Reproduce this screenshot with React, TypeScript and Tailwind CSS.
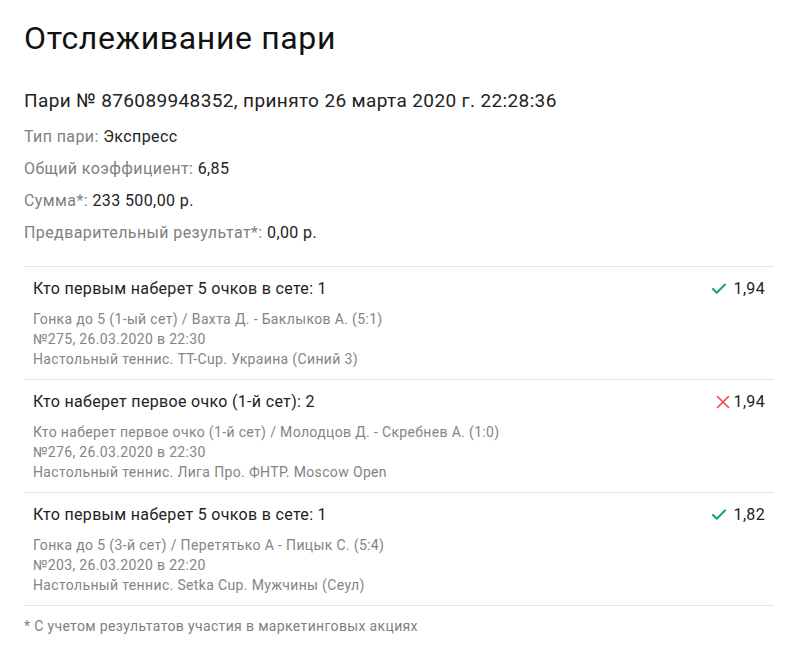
import React from 'react'
import { Check, X } from 'lucide-react'

interface BetEvent {
  outcome: string
  market: string
  number: string
  league: string
  odds: string
  won: boolean
}

const events: BetEvent[] = [
  {
    outcome: 'Кто первым наберет 5 очков в сете: 1',
    market: 'Гонка до 5 (1-ый сет) / Вахта Д. - Баклыков А. (5:1)',
    number: '№275, 26.03.2020 в 22:30',
    league: 'Настольный теннис. TT-Cup. Украина (Синий 3)',
    odds: '1,94',
    won: true,
  },
  {
    outcome: 'Кто наберет первое очко (1-й сет): 2',
    market: 'Кто наберет первое очко (1-й сет) / Молодцов Д. - Скребнев А. (1:0)',
    number: '№276, 26.03.2020 в 22:30',
    league: 'Настольный теннис. Лига Про. ФНТР. Moscow Open',
    odds: '1,94',
    won: false,
  },
  {
    outcome: 'Кто первым наберет 5 очков в сете: 1',
    market: 'Гонка до 5 (3-й сет) / Перетятько А - Пицык С. (5:4)',
    number: '№203, 26.03.2020 в 22:20',
    league: 'Настольный теннис. Setka Cup. Мужчины (Сеул)',
    odds: '1,82',
    won: true,
  },
]

const summary = [
  { label: 'Тип пари:', value: 'Экспресс' },
  { label: 'Общий коэффициент:', value: '6,85' },
  { label: 'Сумма*:', value: '233 500,00 р.' },
  { label: 'Предварительный результат*:', value: '0,00 р.' },
]

const EventRow: React.FC<{ event: BetEvent }> = ({ event }) => (
  <div className="border-t border-[#e4e4e4] pl-[9px] pr-[9px] pt-[11px] pb-[10px]">
    <div className="flex items-center justify-between">
      <span className="text-[16px] leading-[22px] text-[#222] tracking-[0.02em]">{event.outcome}</span>
      <span className="flex items-center text-[16px] leading-[22px] text-[#222] tracking-[0.02em]">
        {event.won ? (
          <Check className="mr-[6px] h-[18px] w-[18px] text-[#16a56c]" strokeWidth={2.8} />
        ) : (
          <X className="mr-[0px] h-[22px] w-[22px] text-[#f2424c]" strokeWidth={1.7} />
        )}
        {event.odds}
      </span>
    </div>
    <div className="mt-[9px] text-[14px] leading-[20px] text-[#848484] tracking-[0.025em]">
      <div>{event.market}</div>
      <div>{event.number}</div>
      <div>{event.league}</div>
    </div>
  </div>
)

export default function App() {
  return (
    <div className="min-h-[650px] bg-white px-6 pt-[18px] font-['Roboto',sans-serif]">
      <h1 className="text-[32px] leading-[40px] font-normal text-[#111] tracking-[0.02em]">
        Отслеживание пари
      </h1>

      <div className="mt-[31px] text-[19px] leading-[24px] text-[#222] tracking-[0.02em]">
        Пари № 876089948352, принято 26 марта 2020 г. 22:28:36
      </div>

      <div className="mt-2 text-[16px] tracking-[0.025em]">
        {summary.map((row) => (
          <div key={row.label} className="leading-[32px]">
            <span className="text-[#808080]">{row.label}</span>{' '}
            <span className="text-[#222]">{row.value}</span>
          </div>
        ))}
      </div>

      <div className="mt-[17px] w-[750px]">
        {events.map((event, i) => (
          <EventRow key={i} event={event} />
        ))}
        <div className="border-t border-[#e4e4e4]" />
      </div>

      <div className="mt-[10px] text-[14px] leading-[20px] text-[#808080] tracking-[0.025em]">
        * С учетом результатов участия в маркетинговых акциях
      </div>
    </div>
  )
}
